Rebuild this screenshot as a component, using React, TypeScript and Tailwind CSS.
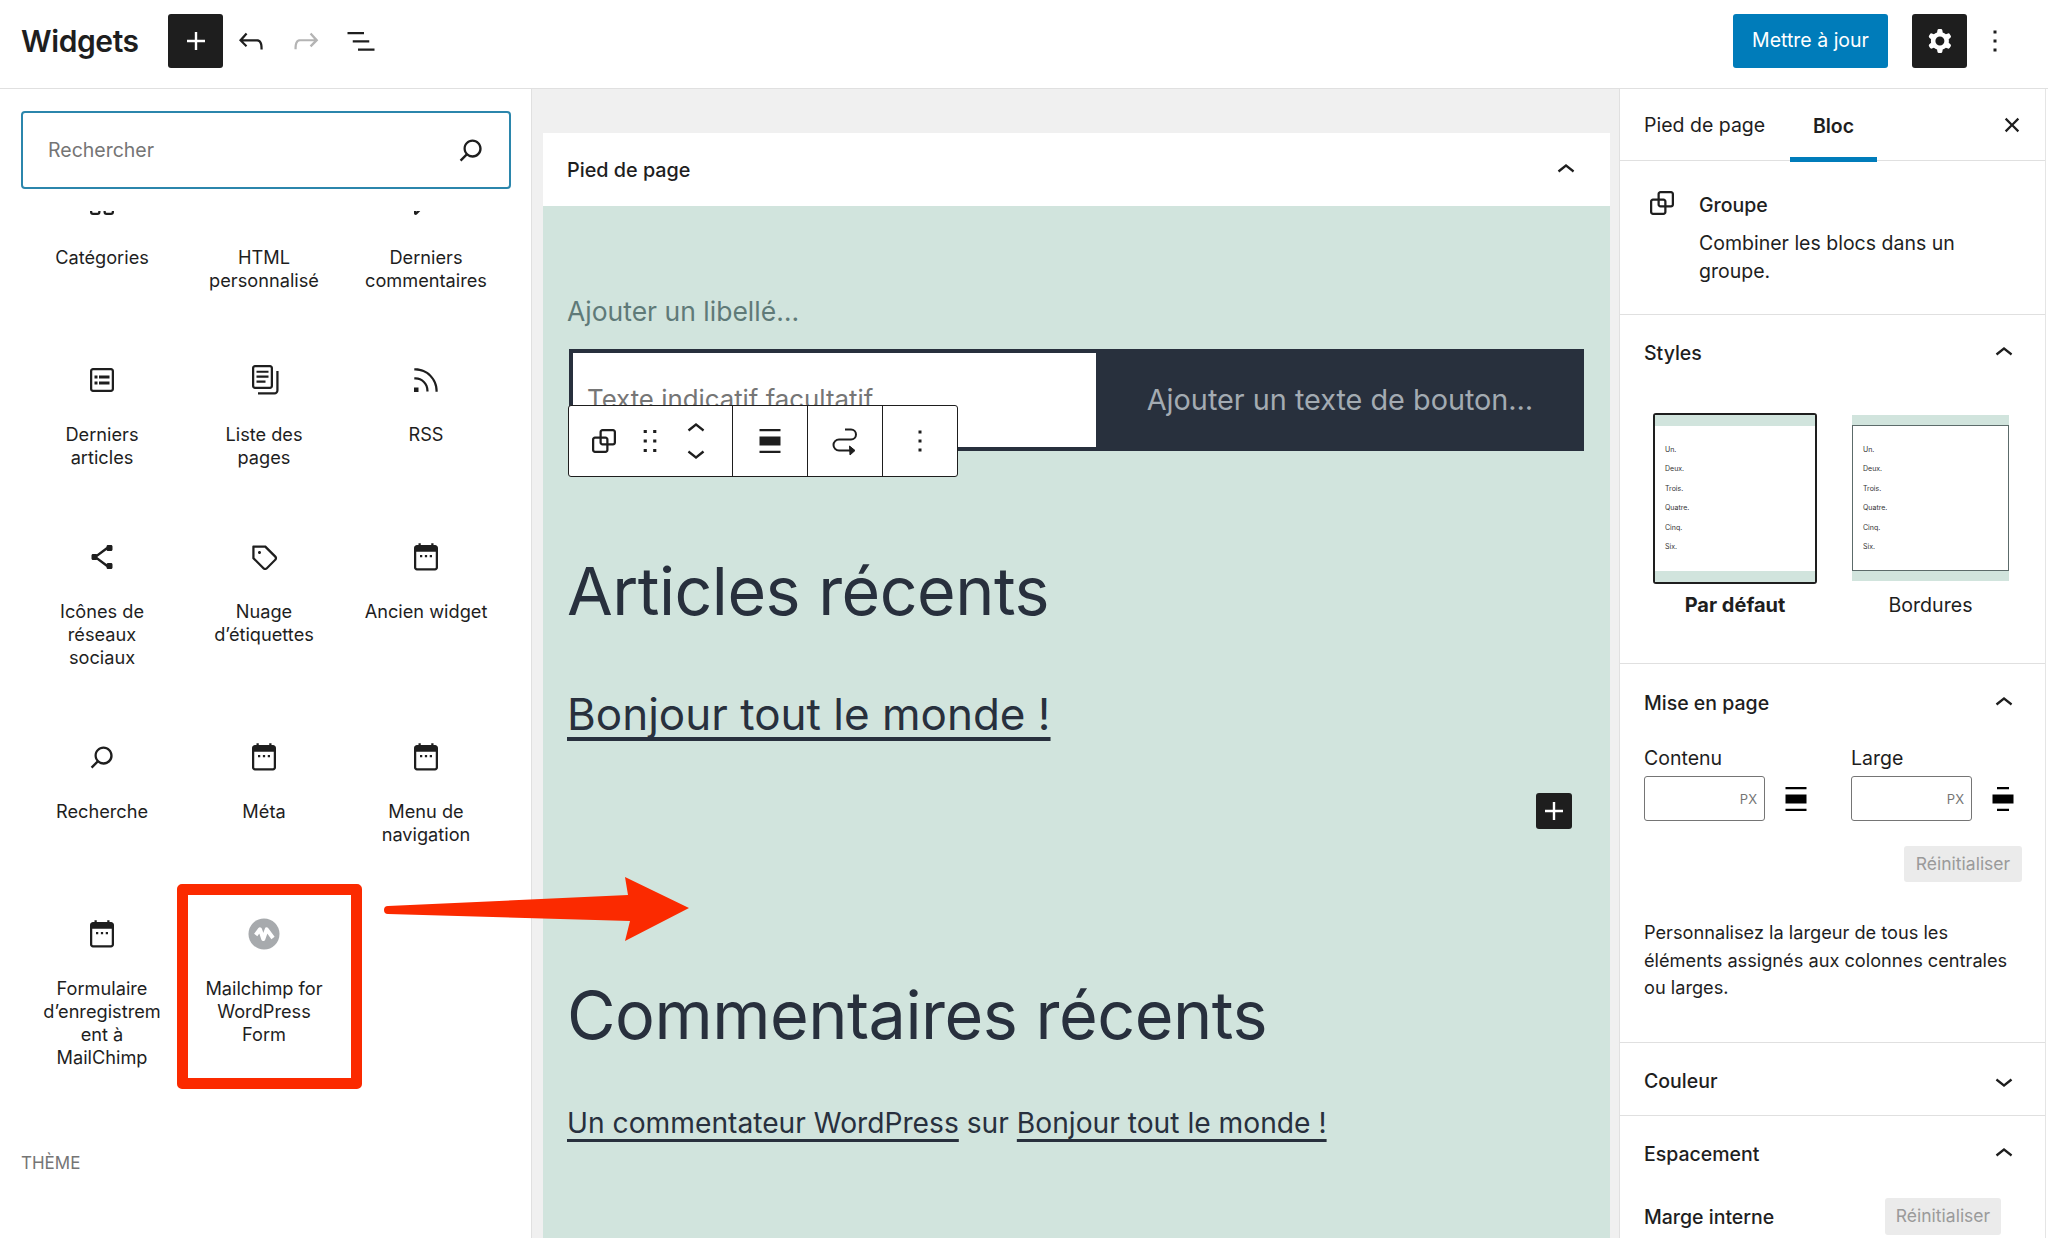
import React from "react";

const P: Record<string, string> = {
  plus: "M18 11.2h-5.2V6h-1.6v5.2H6v1.6h5.2V18h1.6v-5.2H18z",
  undo: "M18.3 11.7c-.6-.6-1.4-.9-2.3-.9H6.7l2.9-3.3-1.1-1-4.5 5L8.5 16l1-1-2.7-2.7H16c.5 0 .9.2 1.3.5 1 1 1 3.4 1 4.5v.3h1.5v-.2c0-1.5 0-4.3-1.5-5.7z",
  redo: "M15.6 6.5l-1.1 1 2.9 3.3H8c-.9 0-1.7.3-2.3.9-1.4 1.5-1.4 4.2-1.4 5.6v.2h1.5v-.3c0-1.1 0-3.5 1-4.5.3-.3.7-.5 1.3-.5h9.2L14.5 15l1.1 1.1 4.6-4.6-4.6-5z",
  list: "M3 6h11v1.5H3V6Zm3.5 5.5h11V13h-11v-1.5ZM21 17H10v1.5h11V17Z",
  cog: "M10.289 4.836A1 1 0 0111.275 4h1.306a1 1 0 01.987.836l.244 1.466c.787.26 1.503.679 2.108 1.218l1.393-.522a1 1 0 011.216.437l.653 1.13a1 1 0 01-.23 1.273l-1.148.944a6.025 6.025 0 010 2.435l1.149.946a1 1 0 01.23 1.272l-.653 1.13a1 1 0 01-1.216.437l-1.394-.522c-.605.54-1.32.958-2.108 1.218l-.244 1.466a1 1 0 01-.987.836h-1.306a1 1 0 01-.986-.836l-.244-1.466a5.995 5.995 0 01-2.108-1.218l-1.394.522a1 1 0 01-1.217-.436l-.653-1.131a1 1 0 01.23-1.272l1.149-.946a6.026 6.026 0 010-2.435l-1.148-.944a1 1 0 01-.23-1.272l.653-1.131a1 1 0 011.217-.437l1.393.522a5.994 5.994 0 012.108-1.218l.244-1.466zM14.929 12a3 3 0 11-6 0 3 3 0 016 0z",
  more: "M13 19h-2v-2h2v2zm0-6h-2v-2h2v2zm0-6h-2V5h2v2z",
  search: "M13 5c-3.3 0-6 2.7-6 6 0 1.4.5 2.7 1.3 3.7l-3.8 3.8 1.1 1.1 3.8-3.8c1 .8 2.3 1.3 3.7 1.3 3.3 0 6-2.7 6-6S16.3 5 13 5zm0 10.5c-2.5 0-4.5-2-4.5-4.5s2-4.5 4.5-4.5 4.5 2 4.5 4.5-2 4.5-4.5 4.5z",
  close: "M12 13.06l3.712 3.713 1.061-1.06L13.061 12l3.712-3.712-1.06-1.06L12 10.938 8.288 7.227l-1.061 1.06L10.939 12l-3.712 3.712 1.06 1.061L12 13.061z",
  up: "M6.5 12.4L12 8l5.5 4.4-.9 1.2L12 10l-4.5 3.6-1-1.2z",
  down: "M17.5 11.6L12 16l-5.5-4.4.9-1.2L12 14l4.5-3.6 1 1.2z",
  group: "M18 4h-7c-1.1 0-2 .9-2 2v3H6c-1.1 0-2 .9-2 2v7c0 1.1.9 2 2 2h7c1.1 0 2-.9 2-2v-3h3c1.1 0 2-.7 2-2V6c0-1.1-.9-2-2-2zm-4.5 14c0 .3-.2.5-.5.5H6c-.3 0-.5-.2-.5-.5v-7c0-.3.2-.5.5-.5h3V13c0 1.1.9 2 2 2h2.5v3zm0-4.5H11c-.3 0-.5-.2-.5-.5v-2.5H13c.3 0 .5.2.5.5v2.5zm5-.5c0 .3-.2.5-.5.5h-3V11c0-1.1-.9-2-2-2h-2.5V6c0-.3.2-.5.5-.5h7c.3 0 .5.2.5.5v7z",
  drag: "M8 7h2V5H8v2zm0 6h2v-2H8v2zm0 6h2v-2H8v2zm6-14v2h2V5h-2zm0 8h2v-2h-2v2zm0 6h2v-2h-2v2z",
  wide: "M5 4h14v1.5H5zM5 18.5h14V20H5zM5 9h14v6H5z",
  narrow: "M8 4h8v1.5H8zM8 18.5h8V20H8zM5 9h14v6H5z",
  posts: "M18 4H6c-1.1 0-2 .9-2 2v12c0 1.1.9 2 2 2h12c1.1 0 2-.9 2-2V6c0-1.1-.9-2-2-2zm.5 14c0 .3-.2.5-.5.5H6c-.3 0-.5-.2-.5-.5V6c0-.3.2-.5.5-.5h12c.3 0 .5.2.5.5v12zM7 11h2V9H7v2zm0 4h2v-2H7v2zm3-4h7V9h-7v2zm0 4h7v-2h-7v2z",
  pages: "M7 13.8h6v-1.5H7v1.5zM18 16V4c0-1.1-.9-2-2-2H6c-1.1 0-2 .9-2 2v12c0 1.1.9 2 2 2h10c1.1 0 2-.9 2-2zM5.5 16V4c0-.3.2-.5.5-.5h10c.3 0 .5.2.5.5v12c0 .3-.2.5-.5.5H6c-.3 0-.5-.2-.5-.5zM7 10.5h8V9H7v1.5zm0-3.3h8V5.8H7v1.4zM20.2 6v13c0 .7-.6 1.2-1.2 1.2H8v1.5h11c1.5 0 2.7-1.2 2.7-2.8V6h-1.5z",
  rss: "M5 10.2h-.8v1.5H5c1.9 0 3.8.8 5.1 2.1 1.4 1.4 2.1 3.2 2.1 5.1v.8h1.5V19c0-2.3-.9-4.5-2.6-6.2-1.6-1.6-3.8-2.6-6.1-2.6zm10.4-1.6C12.6 5.8 8.9 4.2 5 4.2h-.8v1.5H5c3.5 0 6.9 1.4 9.4 3.9s3.9 5.8 3.9 9.4v.8h1.5V19c0-3.9-1.6-7.6-4.4-10.4zM4 20h3v-3H4v3z",
  share: "M9 11.8l6.1-4.5c.1.4.4.7.9.7h2c.6 0 1-.4 1-1V5c0-.6-.4-1-1-1h-2c-.6 0-1 .4-1 1v.4l-6.4 4.8c-.2-.1-.4-.2-.6-.2H6c-.6 0-1 .4-1 1v2c0 .6.4 1 1 1h2c.2 0 .4-.1.6-.2l6.4 4.8v.4c0 .6.4 1 1 1h2c.6 0 1-.4 1-1v-2c0-.6-.4-1-1-1h-2c-.5 0-.8.3-.9.7L9 12.2v-.4z",
  tag: "M20.1 11.2l-6.7-6.7c-.1-.1-.3-.2-.5-.2H5c-.4-.1-.8.3-.8.7v7.8c0 .2.1.4.2.5l6.7 6.7c.2.2.5.4.7.5s.6.2.9.2c.3 0 .6-.1.9-.2.3-.1.5-.3.8-.5l5.6-5.6c.4-.4.7-1 .7-1.6.1-.6-.2-1.2-.6-1.6zM19 13.4L13.4 19c-.1.1-.2.1-.3.2-.2.1-.4.1-.6 0-.1 0-.2-.1-.3-.2l-6.5-6.5V5.8h6.8l6.5 6.5c.2.2.2.4.2.6 0 .1 0 .3-.2.5zM9 8c-.6 0-1 .4-1 1s.4 1 1 1 1-.4 1-1-.4-1-1-1z",
  widget: "M6 4h1V2.8h1.5V4h7V2.8H17V4h1c1.1 0 2 .9 2 2v13c0 1.1-.9 2-2 2H6c-1.1 0-2-.9-2-2V6c0-1.1.9-2 2-2zm-.5 4.5V19c0 .3.2.5.5.5h12c.3 0 .5-.2.5-.5V8.5h-13zM8 10.7h1.5v1.5H8zm3.25 0h1.5v1.5h-1.5zm3.25 0H16v1.5h-1.5z",
  category: "M6 5.5h3a.5.5 0 01.5.5v3a.5.5 0 01-.5.5H6a.5.5 0 01-.5-.5V6a.5.5 0 01.5-.5zM4 6a2 2 0 012-2h3a2 2 0 012 2v3a2 2 0 01-2 2H6a2 2 0 01-2-2V6zm11-.5h3a.5.5 0 01.5.5v3a.5.5 0 01-.5.5h-3a.5.5 0 01-.5-.5V6a.5.5 0 01.5-.5zM13 6a2 2 0 012-2h3a2 2 0 012 2v3a2 2 0 01-2 2h-3a2 2 0 01-2-2V6zm5 8.5h-3a.5.5 0 00-.5.5v3a.5.5 0 00.5.5h3a.5.5 0 00.5-.5v-3a.5.5 0 00-.5-.5zM15 13a2 2 0 00-2 2v3a2 2 0 002 2h3a2 2 0 002-2v-3a2 2 0 00-2-2h-3zm-9 1.5h3a.5.5 0 01.5.5v3a.5.5 0 01-.5.5H6a.5.5 0 01-.5-.5v-3a.5.5 0 01.5-.5zM4 15a2 2 0 012-2h3a2 2 0 012 2v3a2 2 0 01-2 2H6a2 2 0 01-2-2v-3z",
  comment: "M18 4H6c-1.1 0-2 .9-2 2v12.9c0 .6.5 1.1 1.1 1.1.3 0 .5-.1.8-.3L8.5 17H18c1.1 0 2-.9 2-2V6c0-1.1-.9-2-2-2zm.5 11c0 .3-.2.5-.5.5H7.9l-2.4 2.4V6c0-.3.2-.5.5-.5h12c.3 0 .5.2.5.5v9z",
};

function Icon({ n, className = "w-[36px] h-[36px]" }: { n: string; className?: string }) {
  return (
    <svg viewBox="0 0 24 24" className={"shrink-0 " + className} fill="currentColor" fillRule="evenodd" clipRule="evenodd">
      <path d={P[n]} />
    </svg>
  );
}

function Mailchimp() {
  return (
    <svg viewBox="0 0 36 36" className="w-[36px] h-[36px] shrink-0">
      <circle cx="18" cy="18" r="15.5" fill="#a7aaad" />
      <path d="M9.7 19 L14 13.3 L17.3 23 L20.7 13.3 L27 22" fill="none" stroke="#fff" strokeWidth="4" strokeLinejoin="round" />
    </svg>
  );
}

const items: { label: string; icon?: string; mc?: boolean }[] = [
  { label: "Catégories", icon: "category" },
  { label: "HTML personnalisé" },
  { label: "Derniers commentaires", icon: "comment" },
  { label: "Derniers articles", icon: "posts" },
  { label: "Liste des pages", icon: "pages" },
  { label: "RSS", icon: "rss" },
  { label: "Icônes de réseaux sociaux", icon: "share" },
  { label: "Nuage d’étiquettes", icon: "tag" },
  { label: "Ancien widget", icon: "widget" },
  { label: "Recherche", icon: "search" },
  { label: "Méta", icon: "widget" },
  { label: "Menu de navigation", icon: "widget" },
  { label: "Formulaire d’enregistrement à MailChimp", icon: "widget" },
  { label: "Mailchimp for WordPress Form", mc: true },
];

function Thumb() {
  return (
    <div className="flex flex-col gap-[6.4px] pl-[10px] pt-[17px] text-[7px] leading-[13px] text-[#333]">
      {["Un.", "Deux.", "Trois.", "Quatre.", "Cinq.", "Six."].map((l) => (
        <div key={l}>{l}</div>
      ))}
    </div>
  );
}

function SectionHead({ title, open = true }: { title: string; open?: boolean }) {
  return (
    <div className="flex items-center justify-between pr-[23px] h-[36px]">
      <span className="text-[#1e1e1e] text-[19.5px] leading-[24px] font-medium">{title}</span>
      <Icon n={open ? "up" : "down"} className="w-[36px] h-[36px] text-[#1e1e1e]" />
    </div>
  );
}

function UnitInput() {
  return (
    <div className="w-[121px] h-[45px] border border-[#757575] rounded-[3px] flex items-center justify-end pr-[7px] pt-[2px] text-[13px] text-[#757575] bg-white">PX</div>
  );
}

function Reset({ className }: { className: string }) {
  return (
    <div className={"rounded-[3px] bg-[#ebebeb] text-[#9a9a9a] text-[17.5px] flex items-center justify-center " + className}>Réinitialiser</div>
  );
}

export default function App() {
  return (
    <div className="relative w-[2048px] h-[1238px] overflow-hidden bg-white flex flex-col font-['Inter',sans-serif] text-[#1e1e1e]">
      {/* top bar */}
      <header className="h-[89px] shrink-0 border-b border-[#e0e0e0] flex items-center pl-[21px] pb-[6px] bg-white">
        <h1 className="text-[30px] font-semibold tracking-[-0.4px] w-[147px] leading-none">Widgets</h1>
        <button className="w-[55px] h-[54px] bg-[#1e1e1e] rounded-[3px] text-white flex items-center justify-center">
          <Icon n="plus" />
        </button>
        <div className="w-[55px] flex justify-center"><Icon n="undo" /></div>
        <div className="w-[55px] flex justify-center text-[#b4b4b4]"><Icon n="redo" /></div>
        <div className="w-[55px] flex justify-center"><Icon n="list" /></div>
        <div className="flex-1" />
        <button className="w-[155px] h-[54px] bg-[#007cba] rounded-[3px] text-white text-[19.5px] flex items-center justify-center">Mettre à jour</button>
        <button className="ml-[24px] w-[55px] h-[54px] bg-[#1e1e1e] rounded-[3px] text-white flex items-center justify-center">
          <Icon n="cog" />
        </button>
        <div className="ml-[10px] mr-[35px] w-[36px] flex justify-center"><Icon n="more" /></div>
      </header>

      <div className="flex flex-1 min-h-0">
        {/* inserter */}
        <aside className="w-[532px] shrink-0 bg-white border-r border-[#e0e0e0] flex flex-col">
          <div className="h-[122px] shrink-0 pt-[22px] pl-[21px] pr-[20px]">
            <div className="h-[78px] border-2 border-[#2b86ac] rounded-[4px] flex items-center justify-between pl-[25px] pr-[20px]">
              <span className="text-[19.5px] text-[#757575] pt-[2px]">Rechercher</span>
              <Icon n="search" className="w-[36px] h-[36px] text-[#1e1e1e]" />
            </div>
          </div>
          <div className="flex-1 overflow-hidden px-[21px]">
            <div className="-mt-[43px] grid grid-cols-[162px_162px_162px] items-start">
              {items.map((it) => (
                <div key={it.label} className="flex flex-col items-center pt-[17px] pb-[53.5px] px-[19px]">
                  <div className="h-[36px] flex justify-center">
                    {it.mc ? <Mailchimp /> : it.icon ? <Icon n={it.icon} /> : null}
                  </div>
                  <div className="mt-[24.5px] text-center text-[18.2px] leading-[23px] text-[#1e1e1e] break-words w-full">{it.label}</div>
                </div>
              ))}
            </div>
            <div className="mt-[31px] text-[17px] leading-[20px] text-[#757575]">THÈME</div>
          </div>
        </aside>

        {/* canvas */}
        <main className="flex-1 min-w-0 bg-[#f0f0f0] pt-[44px] pl-[11px] pr-[9px]">
          <div className="relative h-[1200px] bg-[#d1e4dd]">
            <div className="h-[73px] bg-white flex items-center justify-between pl-[24px] pr-[26px]">
              <span className="text-[19.8px] font-medium pt-[2px]">Pied de page</span>
              <Icon n="up" />
            </div>
            <div className="pl-[24px] pr-[26px] text-[#28303d]">
              <div className="pt-[87px] text-[26.5px] leading-[36px] text-[#5f7a78]">Ajouter un libellé…</div>
              <div className="mt-[20px] ml-[2px] h-[102px] flex">
                <div className="w-[527px] bg-white border-[4px] border-[#28303d] border-r-0 overflow-hidden pl-[14px] pt-[28px] text-[25.8px] leading-[36px] text-[#767676]">Texte indicatif facultatif</div>
                <div className="flex-1 bg-[#28303d] flex items-center justify-center text-[28.8px] text-[#a3abb2]">Ajouter un texte de bouton…</div>
              </div>
              <h2 className="mt-[96px] text-[66.3px] leading-[88px] tracking-[-0.5px]">Articles récents</h2>
              <div className="mt-[49px] text-[44px] leading-[60px] underline decoration-[4px] underline-offset-[7px] [text-decoration-skip-ink:none]">Bonjour tout le monde !</div>
              <h2 className="mt-[227px] text-[66.5px] leading-[88px] tracking-[-0.5px]">Commentaires récents</h2>
              <div className="mt-[43px] text-[28.2px] leading-[42px]">
                <span className="underline decoration-[3px] underline-offset-[6px] [text-decoration-skip-ink:none]">Un commentateur WordPress</span> sur{" "}
                <span className="underline decoration-[3px] underline-offset-[6px] [text-decoration-skip-ink:none]">Bonjour tout le monde !</span>
              </div>
            </div>

            {/* block toolbar */}
            <div className="absolute left-[25px] top-[272px] h-[72px] w-[390px] bg-white border border-[#1e1e1e] rounded-[3px] flex text-[#1e1e1e]">
              <div className="w-[164px] flex items-center border-r border-[#1e1e1e]">
                <div className="w-[70px] flex justify-center"><Icon n="group" /></div>
                <div className="w-[22px] flex justify-center"><Icon n="drag" className="w-[38px] h-[38px]" /></div>
                <div className="w-[70px] flex flex-col items-center">
                  <Icon n="up" className="w-[36px] h-[36px] -mb-[12px]" />
                  <Icon n="down" className="w-[36px] h-[36px]" />
                </div>
              </div>
              <div className="w-[75px] flex items-center justify-center border-r border-[#1e1e1e]"><Icon n="wide" /></div>
              <div className="w-[75px] flex items-center justify-center border-r border-[#1e1e1e]">
                <svg viewBox="10 7 28 31" className="w-[28px] h-[31px]" fill="none" stroke="#1e1e1e" strokeWidth="2">
                  <path d="M24 10.5 H30 a5 5 0 0 1 0 10 H18 a5.5 5.5 0 0 0 0 11 H33" />
                  <path d="M28.5 27 L34 31.5 L29 36 Z" fill="#1e1e1e" strokeWidth="1" />
                </svg>
              </div>
              <div className="flex-1 flex items-center justify-center"><Icon n="more" /></div>
            </div>

            {/* appender */}
            <div className="absolute left-[993px] top-[660px] w-[36px] h-[36px] bg-[#1e1e1e] rounded-[3px] text-white flex items-center justify-center">
              <Icon n="plus" />
            </div>
          </div>
        </main>

        {/* settings */}
        <aside className="w-[429px] shrink-0 bg-white border-l border-[#e0e0e0] pr-[2px]">
          <div className="h-full border-r border-[#e5e5e5] text-[19.5px]">
            <div className="h-[72px] border-b border-[#e0e0e0] flex items-start pl-[24px]">
              <div className="h-[72px] flex items-center w-[146px] pt-[2px]">Pied de page</div>
              <div className="h-[73px] w-[87px] border-b-[5px] border-[#007cba] flex items-center justify-center font-semibold pt-[7px]">Bloc</div>
              <div className="flex-1" />
              <div className="h-[72px] flex items-center pr-[15px]"><Icon n="close" /></div>
            </div>
            <div className="h-[154px] border-b border-[#e0e0e0] flex pl-[24px] pt-[24px]">
              <Icon n="group" />
              <div className="ml-[19px] w-[310px]">
                <div className="font-medium leading-[28px] pt-[6px]">Groupe</div>
                <div className="mt-[10px] leading-[28px]">Combiner les blocs dans un groupe.</div>
              </div>
            </div>
            <div className="h-[349px] border-b border-[#e0e0e0] pl-[24px] pt-[20px]">
              <SectionHead title="Styles" />
              <div className="mt-[42px] flex pl-[9px]">
                <div className="w-[164px]">
                  <div className="w-[164px] h-[171px] border-[2.5px] border-[#1e1e1e] rounded-[3px] bg-white flex flex-col justify-between">
                    <div className="h-[11px] bg-[#d1e4dd]" />
                    <div className="flex-1"><Thumb /></div>
                    <div className="h-[11px] bg-[#d1e4dd]" />
                  </div>
                  <div className="mt-[8px] text-center font-bold text-[20px] leading-[26px]">Par défaut</div>
                </div>
                <div className="w-[157px] ml-[35px]">
                  <div className="mt-[2px] w-[157px] h-[166px] bg-[#d1e4dd] py-[10px]">
                    <div className="h-full border border-[#5c6b6a] bg-white"><Thumb /></div>
                  </div>
                  <div className="mt-[11px] text-center text-[19.6px] leading-[26px]">Bordures</div>
                </div>
              </div>
            </div>
            <div className="h-[379px] border-b border-[#e0e0e0] pl-[24px] pt-[21px]">
              <SectionHead title="Mise en page" />
              <div className="mt-[25px] flex">
                <div className="flex flex-col">
                  <span className="leading-[25px] h-[30px]">Contenu</span>
                  <div className="flex items-center">
                    <UnitInput />
                    <Icon n="wide" className="ml-[13px] w-[36px] h-[36px] text-black" />
                  </div>
                </div>
                <div className="flex flex-col ml-[37px]">
                  <span className="leading-[25px] h-[30px]">Large</span>
                  <div className="flex items-center">
                    <UnitInput />
                    <Icon n="narrow" className="ml-[13px] w-[36px] h-[36px] text-black" />
                  </div>
                </div>
              </div>
              <div className="mt-[25px] flex justify-end pr-[23px]"><Reset className="w-[118px] h-[36px]" /></div>
              <p className="mt-[37px] w-[378px] text-[18.2px] leading-[27.5px]">Personnalisez la largeur de tous les éléments assignés aux colonnes centrales ou larges.</p>
            </div>
            <div className="h-[73px] border-b border-[#e0e0e0] pl-[24px] pt-[3px] flex flex-col justify-center">
              <SectionHead title="Couleur" open={false} />
            </div>
            <div className="pl-[24px] pt-[20px]">
              <SectionHead title="Espacement" />
              <div className="mt-[26px] flex items-center justify-between pr-[44px]">
                <span className="font-medium leading-[24px]">Marge interne</span>
                <Reset className="w-[116px] h-[37px]" />
              </div>
            </div>
          </div>
        </aside>
      </div>

      {/* annotation */}
      <div className="absolute left-[177px] top-[884px] w-[185px] h-[205px] border-[11px] border-[#fb2a00] rounded-[5px]" />
      <svg className="absolute left-[380px] top-[870px] w-[315px] h-[78px]" viewBox="380 870 315 78">
        <path d="M388 906 L628 895 L625 877 L689 908 L625 941 L630 921 L388 914 a4 4 0 0 1 0 -8 z" fill="#fb2a00" />
      </svg>
    </div>
  );
}
